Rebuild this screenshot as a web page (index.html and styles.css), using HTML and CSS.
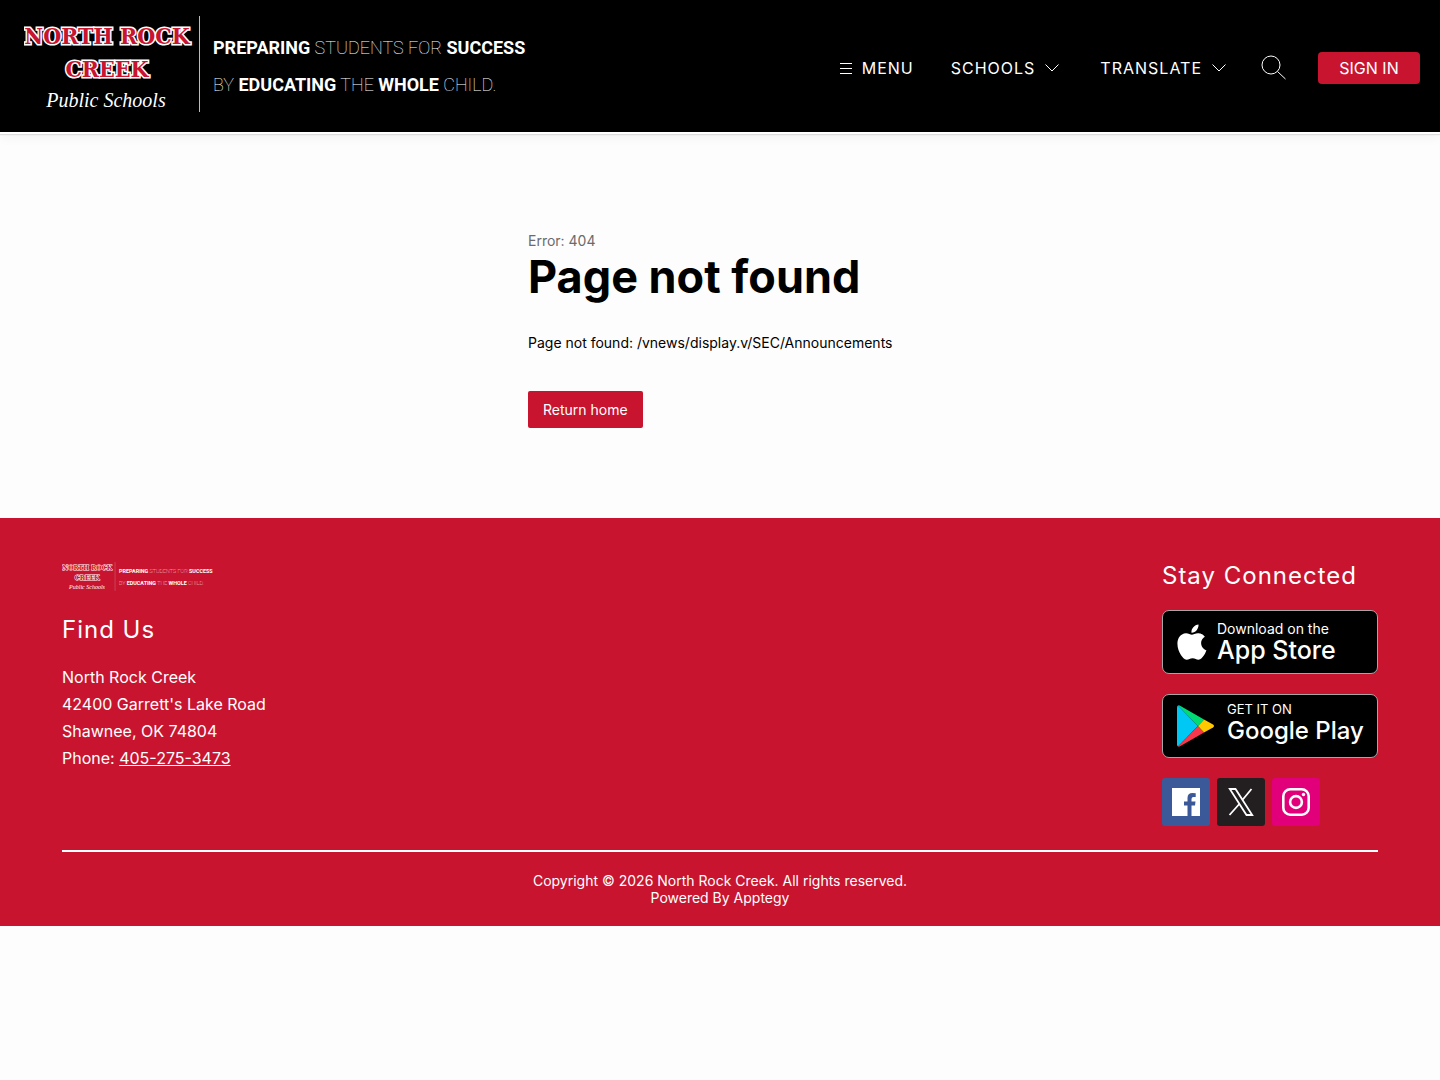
FILE: index.html
```html
<html lang="en-US">
<head>
  <meta charset="UTF-8">
  <meta name="viewport" content="width=device-width">
  <title>Page not found</title>
  <link rel="stylesheet" href="styles.css">
</head>

<body>

<header class="header">
  <a href="#" class="brand" aria-label="North Rock Creek home">
    <svg class="logo" viewBox="0 0 504 100">
      <g id="logo">
        <text class="school" x="83" y="28">NORTH ROCK</text>
        <text class="school" x="83" y="61">CREEK</text>
        <text class="script" x="82" y="91">Public Schools</text>
        <path class="rule" d="M175.500 0V96"/>
        <text class="motto" x="189" y="38"><tspan class="strong">PREPARING</tspan> STUDENTS FOR <tspan class="strong">SUCCESS</tspan></text>
        <text class="motto" x="189" y="75"><tspan>BY </tspan><tspan class="strong">EDUCATING</tspan> THE <tspan class="strong">WHOLE</tspan> CHILD.</text>
      </g>
    </svg>
  </a>
  <nav class="nav">
    <button class="nav-item menu">
      <svg width="12" height="12" viewBox="0 0 12 12"><path d="M0 1.500h12M0 6.500h12M0 11.500h12"/></svg>
      MENU
    </button>
    <button class="nav-item schools">
      SCHOOLS
      <svg width="14" height="8" viewBox="0 0 14 8"><path d="M.5 .5L7 7l6.500-6.500"/></svg>
    </button>
    <button class="nav-item translate">
      TRANSLATE
      <svg width="14" height="8" viewBox="0 0 14 8"><path d="M.5 .5L7 7l6.500-6.500"/></svg>
    </button>
    <button class="nav-item search" aria-label="Search">
      <svg width="26" height="26" viewBox="0 0 26 26"><circle cx="10" cy="10" r="9"/><path d="M16.500 16.500l8 7.500"/></svg>
    </button>
    <a href="#" class="signin">SIGN IN</a>
  </nav>
</header>

<main class="main">
  <div class="error">
    <p class="code">Error: 404</p>
    <h1>Page not found</h1>
    <p class="detail">Page not found: /vnews/display.v/SEC/Announcements</p>
    <a href="#" class="home">Return home</a>
  </div>
</main>

<footer class="footer">
  <div class="columns">
    <div class="find">
      <svg class="logo-small" viewBox="0 0 504 100"><use href="#logo"/></svg>
      <h2>Find Us</h2>
      <address>
        North Rock Creek<br>
        42400 Garrett's Lake Road<br>
        Shawnee, OK 74804<br>
        Phone: <a href="tel:405-275-3473">405-275-3473</a>
      </address>
    </div>
    <div class="connect">
      <h2>Stay Connected</h2>
      <a href="#" class="badge apple">
        <svg width="30" height="36" viewBox="4.500 3 25 30">
          <path fill="#fff" d="M24.600 19c0-3.600 2.900-5.300 3.100-5.400-1.700-2.500-4.300-2.800-5.300-2.900-2.200-.2-4.400 1.300-5.500 1.300-1.200 0-2.900-1.300-4.800-1.300-2.400 0-4.700 1.400-6 3.600-2.600 4.500-.7 11.100 1.800 14.700 1.300 1.800 2.700 3.800 4.700 3.700 1.900-.1 2.600-1.200 4.900-1.200s2.900 1.200 4.900 1.200c2-.1 3.300-1.800 4.600-3.600 1.400-2.100 2-4.100 2-4.200-.1 0-4.400-1.600-4.400-5.900zM20.900 8.200c1-1.300 1.700-3 1.500-4.700-1.500.1-3.300 1-4.300 2.200-1 1.100-1.800 2.900-1.500 4.600 1.600.1 3.300-.8 4.300-2.100z"/>
        </svg>
        <span class="badge-text"><small>Download on the</small><b>App Store</b></span>
      </a>
      <a href="#" class="badge google">
        <svg width="38" height="42" viewBox="0 0 38 42">
          <path fill="#00c8f5" d="M1 .5Q0 1 0 2.500v37Q0 41 1 41.500L21 21z"/>
          <path fill="#00dc72" d="M1 .5Q2 0 3.500 1L27 14.500 21 21z"/>
          <path fill="#f5384b" d="M1 41.500Q2 42 3.500 41L27 27.500 21 21z"/>
          <path fill="#ffc900" d="M27 14.500l9 5q2 1.500 0 3l-9 5L21 21z"/>
        </svg>
        <span class="badge-text"><small>GET IT ON</small><b>Google Play</b></span>
      </a>
      <div class="social">
        <a href="#" class="facebook" aria-label="Facebook">
          <svg width="28" height="28" viewBox="0 0 28 28"><path fill="#fff" d="M0 0h28v28h-8.500V17.500h3.500l.5-4h-4V11q0-2 2-2h2.200V5.300Q22.500 5 20.500 5q-5 0-5 5v3.500H12v4h3.500V28H0z"/></svg>
        </a>
        <a href="#" class="x" aria-label="X">
          <svg width="26" height="28" viewBox="0 0 26 28"><path fill="none" stroke="#fff" stroke-width="1.800" d="M1.800 1h5.700l16.700 26h-5.700zM23.500 1L14.200 12.200M11.300 16L1.500 27"/></svg>
        </a>
        <a href="#" class="instagram" aria-label="Instagram">
          <svg width="28" height="28" viewBox="0 0 28 28"><g fill="none" stroke="#fff" stroke-width="2.600"><rect x="1.300" y="1.300" width="25.400" height="25.400" rx="7"/><circle cx="14" cy="14" r="5.900"/></g><circle cx="21.500" cy="6.500" r="1.700" fill="#fff"/></svg>
        </a>
      </div>
    </div>
  </div>
  <div class="legal">
    <p>Copyright © 2026 North Rock Creek. All rights reserved.</p>
    <p>Powered By <a href="#">Apptegy</a></p>
  </div>
</footer>

</body>
</html>
```

FILE: styles.css
```css
* {
    box-sizing: border-box;
}
body {
    margin: 0;
    background: #fdfdfd;
    color: #000;
    font-family: Inter, sans-serif;
    font-size: 16px;
}
h1, h2, p {
    margin: 0;
}
a {
    color: inherit;
    text-decoration: none;
}
svg {
    display: block;
    flex: none;
}

/* header */
.header {
    display: flex;
    align-items: center;
    justify-content: space-between;
    padding: 16px 20px 16px 24px;
    background: #000;
    color: #fff;
    border-bottom: 1px solid #fff;
    box-shadow: 0 1px 0 #fff, 0 2px 1px #ddd, 0 3px 12px rgba(0,0,0,.06);
}
.logo {
    width: 504px;
    height: 100px;
}
.school {
    font: bold 23px "DejaVu Serif Condensed", "DejaVu Serif", serif;
    text-anchor: middle;
    fill: #c8142f;
    stroke: #fff;
    stroke-width: 3px;
    paint-order: stroke;
}
.script {
    font: italic 20px "Liberation Serif", serif;
    text-anchor: middle;
    fill: #fff;
}
.rule {
    stroke: #bbb;
}
.motto {
    font: 100 18px Roboto, sans-serif;
    fill: #fff;
}
.strong {
    font-weight: bold;
}
.nav {
    display: flex;
    align-items: center;
    padding-top: 3px;
}
.nav-item {
    display: flex;
    align-items: center;
    gap: 10px;
    padding: 0;
    border: 0;
    background: none;
    color: #fff;
    font: 16px Inter, sans-serif;
    letter-spacing: 1px;
    cursor: pointer;
}
.nav-item path, .nav-item circle {
    fill: none;
    stroke: #fff;
}
.menu {
    margin-right: 37px;
}
.schools {
    margin-right: 41px;
}
.translate {
    margin-right: 35px;
}
.search {
    margin-right: 31px;
}
.signin {
    min-width: 102px;
    padding: 6px 20px;
    border-radius: 4px;
    background: #c8142f;
    line-height: 20px;
    text-align: center;
}

/* error message */
.main {
    display: flex;
    justify-content: center;
    padding: 98px 20px 90px;
}
.error {
    width: 384px;
    font-size: 14px;
}
.code {
    color: #6b6b6b;
    line-height: 20px;
}
h1 {
    font-size: 45px;
    line-height: 52px;
}
.detail {
    margin: 30px 0 38px;
    line-height: 20px;
}
.home {
    display: inline-block;
    padding: 10px 15px;
    border-radius: 2px;
    background: #c8142f;
    color: #fff;
    line-height: 17px;
}

/* footer */
.footer {
    padding: 44px 62px 20px;
    background: #c8142f;
    color: #fff;
}
.columns {
    display: flex;
    justify-content: space-between;
    padding-bottom: 24px;
    border-bottom: 2px solid #fff;
}
.logo-small {
    width: 152px;
    height: 30px;
    margin-bottom: 24px;
}
h2 {
    font-size: 24px;
    font-weight: 400;
    letter-spacing: 1px;
    line-height: 28px;
}
address {
    margin-top: 20px;
    font-style: normal;
    line-height: 27px;
}
address a {
    text-decoration: underline;
}
.connect {
    width: 216px;
}
.badge {
    display: flex;
    align-items: center;
    height: 64px;
    margin-top: 20px;
    padding-left: 14px;
    border: 1px solid #a6a6a6;
    border-radius: 7px;
    background: #000;
}
.apple {
    gap: 10px;
}
.google {
    gap: 12px;
}
.badge-text {
    display: flex;
    flex-direction: column;
}
.badge small {
    font-size: 13px;
    line-height: 16px;
}
.badge b {
    font-size: 25px;
    font-weight: 500;
    line-height: 26px;
}
.apple small {
    font-size: 14px;
}
.google .badge-text {
    padding-bottom: 6px;
}
.google b {
    font-size: 24px;
    line-height: 28px;
}
.social {
    display: flex;
    gap: 7px;
    margin-top: 20px;
}
.social a {
    display: flex;
    align-items: center;
    justify-content: center;
    width: 48px;
    height: 48px;
    border-radius: 3px;
}
.facebook {
    background: #3b5998;
}
.x {
    background: #231f20;
}
.instagram {
    background: #e1007a;
}
.legal {
    padding-top: 20px;
    font-size: 14px;
    line-height: 17px;
    text-align: center;
}
```
